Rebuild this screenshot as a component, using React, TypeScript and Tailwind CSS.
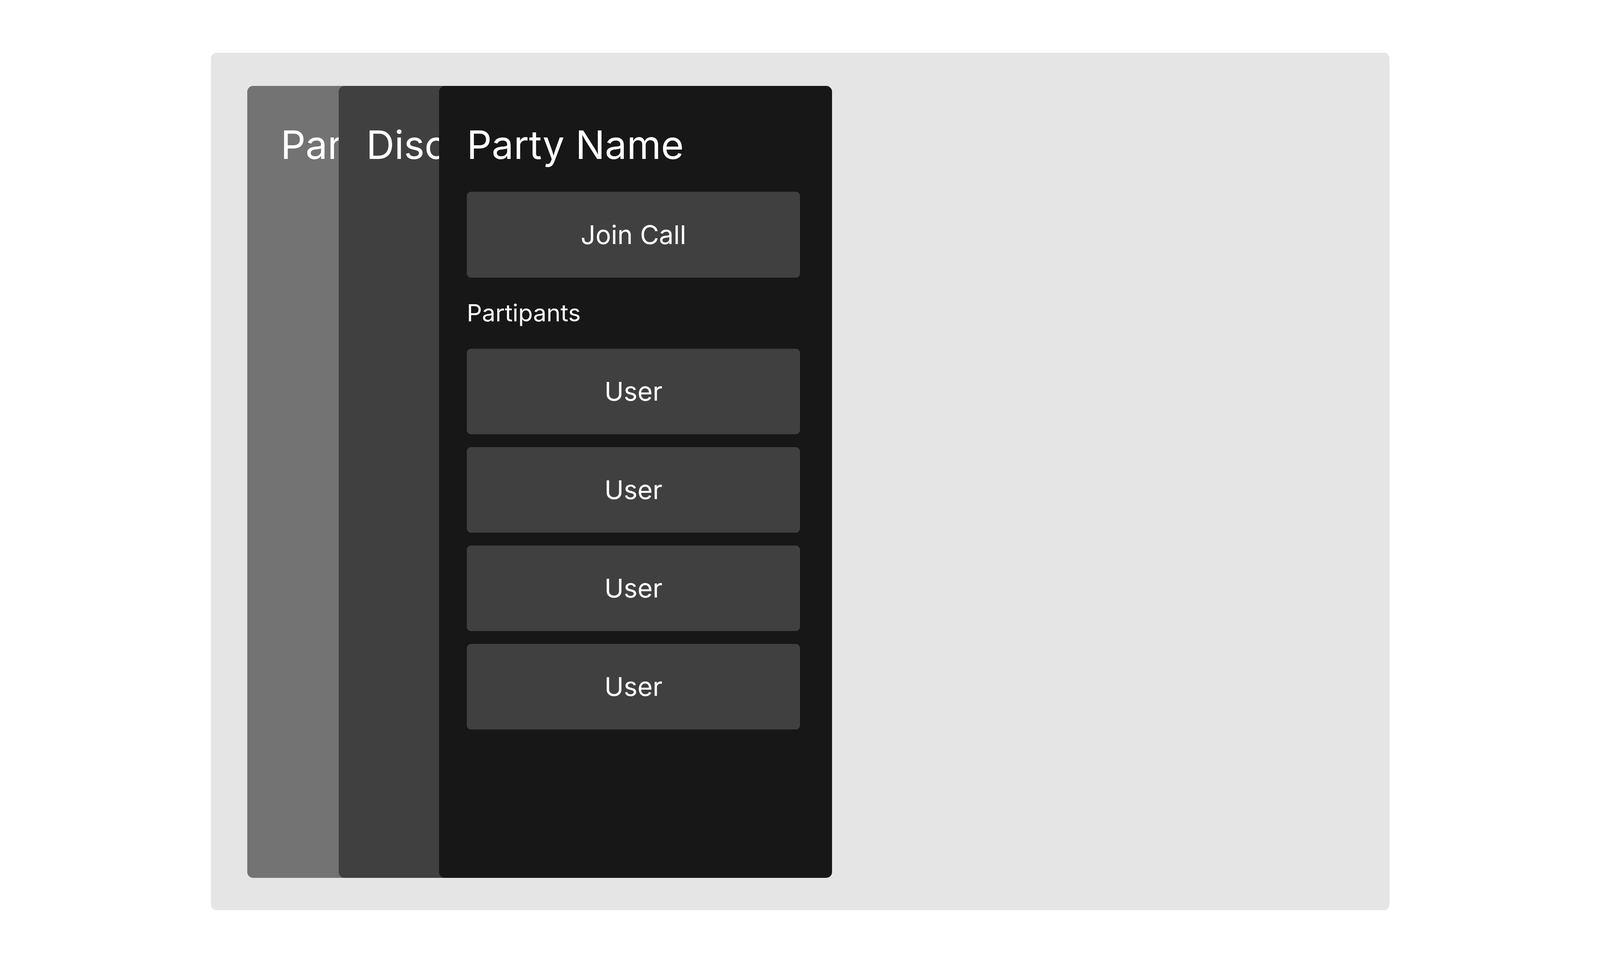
const users = ['User', 'User', 'User', 'User'];

export default function App() {
  return (
    <div className="flex h-screen w-full items-center justify-center bg-white font-['Inter',sans-serif] text-white">
      <div className="flex h-[2196px] w-[3017px] rounded-[15px] bg-neutral-200 pl-[93px] pt-[85px]">
        {/* back panel, only its left strip shows */}
        <div className="relative h-[2028px] w-[1006px] shrink-0 rounded-[15px] bg-neutral-500 pl-[86px] pt-[91px]">
          <h1 className="whitespace-nowrap text-[100px] leading-[120px]">Par</h1>
        </div>

        {/* middle panel */}
        <div className="relative -ml-[772px] h-[2028px] w-[1006px] shrink-0 rounded-[15px] bg-neutral-700 pl-[71px] pt-[91px]">
          <h1 className="whitespace-nowrap text-[100px] leading-[120px]">Disc</h1>
        </div>

        {/* front panel */}
        <div className="relative -ml-[748.5px] flex h-[2028px] w-[1006px] shrink-0 flex-col rounded-[15px] bg-neutral-900 pl-[71px] pt-[91px]">
          <h1 className="text-[100px] leading-[120px]">Party Name</h1>

          <button className="mt-[60px] flex h-[220px] w-[853px] items-center justify-center rounded-[11px] bg-neutral-700 text-[66.5px] leading-none">
            Join Call
          </button>

          <p className="mt-[50px] text-[61px] leading-[80px]">Partipants</p>

          <div className="mt-[52px] flex flex-col gap-[33px]">
            {users.map((u, i) => (
              <div
                key={i}
                className="flex h-[219px] w-[853px] items-center justify-center rounded-[11px] bg-neutral-700 text-[66.5px] leading-none"
              >
                {u}
              </div>
            ))}
          </div>
        </div>
      </div>
    </div>
  );
}
